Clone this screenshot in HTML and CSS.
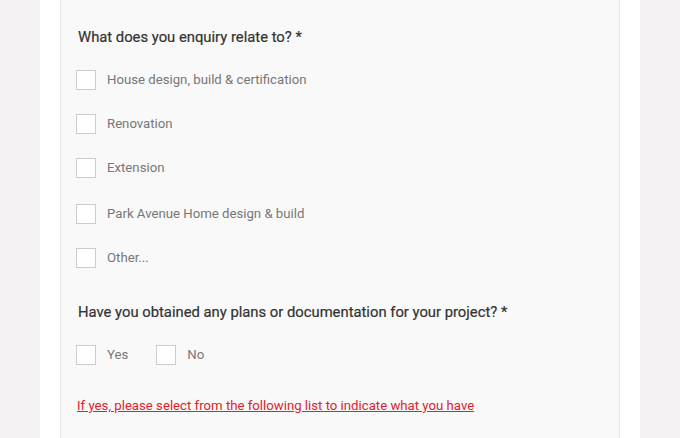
FILE: index.html
```html
<!DOCTYPE html>
<html>
<head>
<meta charset="utf-8">
<link rel="stylesheet" href="styles.css">
</head>
<body>
<div class="page">
  <div class="column">
    <div class="panel">
      <h3 class="question">What does you enquiry relate to? *</h3>
      <ul class="options">
        <li class="option"><span class="box"></span><span class="label">House design, build &amp; certification</span></li>
        <li class="option"><span class="box"></span><span class="label">Renovation</span></li>
        <li class="option"><span class="box"></span><span class="label">Extension</span></li>
        <li class="option option-gap"><span class="box"></span><span class="label">Park Avenue Home design &amp; build</span></li>
        <li class="option"><span class="box"></span><span class="label">Other...</span></li>
      </ul>
      <h3 class="question q2">Have you obtained any plans or documentation for your project? *</h3>
      <div class="inline-options">
        <div class="option inline"><span class="box"></span><span class="label">Yes</span></div>
        <div class="option inline"><span class="box"></span><span class="label">No</span></div>
      </div>
      <a class="note">If yes, please select from the following list to indicate what you have</a>
    </div>
  </div>
</div>
</body>
</html>
```
FILE: styles.css
```css
html, body {
  margin: 0;
  padding: 0;
  background: #f4f2f2;
  font-family: Roboto, "Liberation Sans", Arial, sans-serif;
}
.page {
  height: 438px;
  overflow: hidden;
}
.column {
  margin-left: 40px;
  width: 560px;
  padding: 0 20px;
  background: #ffffff;
  height: 100%;
}
.panel {
  box-sizing: border-box;
  height: 100%;
  background: #f9f9f9;
  border-left: 1px solid #e6e6e6;
  border-right: 1px solid #e6e6e6;
  padding: 28px 0 0 15px;
}
.question {
  margin: 0 0 0 2px;
  font-size: 14.8px;
  font-weight: 400;
  color: #333333;
  line-height: 18px;
  -webkit-text-stroke: 0.2px #333333;
}
.options {
  list-style: none;
  margin: 24px 0 0 0;
  padding: 0;
  display: flex;
  flex-direction: column;
  gap: 24px;
}
.option {
  display: flex;
  align-items: center;
  height: 20px;
}
.option-gap {
  margin-top: 2px;
}
.box {
  box-sizing: border-box;
  width: 20px;
  height: 20px;
  border: 1px solid #cccccc;
  background: #ffffff;
  flex: none;
}
.label {
  margin-left: 11px;
  font-size: 13.2px;
  color: #777777;
  line-height: 18px;
  margin-top: -1px;
}
.q2 {
  margin-top: 35px;
}
.inline-options {
  display: flex;
  gap: 28px;
  margin-top: 24px;
}
.note {
  display: inline-block;
  margin-top: 33px;
  margin-left: 1px;
  font-size: 13.2px;
  color: #e3202a;
  text-decoration: underline;
}
```
